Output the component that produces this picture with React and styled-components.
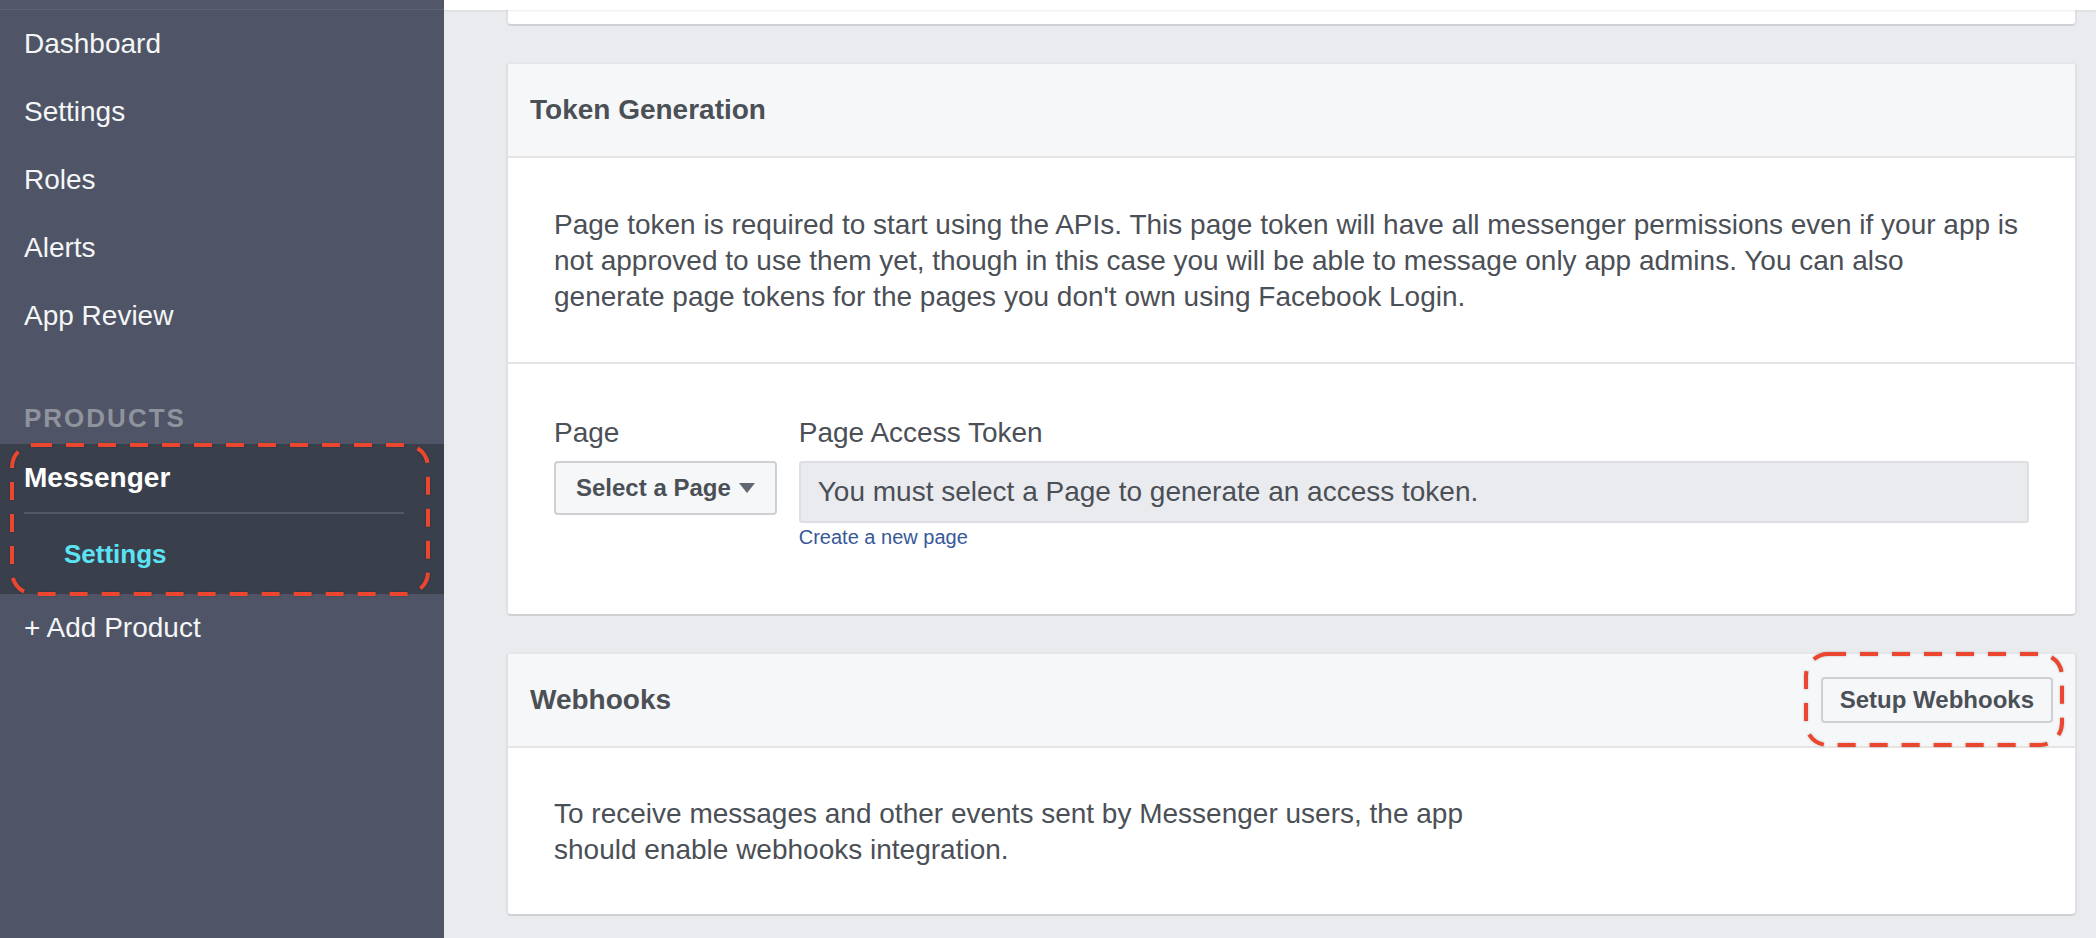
import React from 'react'
import styled, { createGlobalStyle } from 'styled-components'

const GlobalStyle = createGlobalStyle`
  html, body {
    margin: 0;
    padding: 0;
    height: 100%;
    overflow: hidden;
  }
  body {
    font-family: "Liberation Sans", Arial, Helvetica, sans-serif;
    color: #4b4f56;
  }
`

const Page = styled.div`
  display: flex;
  height: 100vh;
  overflow: hidden;
`

const Sidebar = styled.aside`
  width: 444px;
  flex-shrink: 0;
  background: #4f5566;
  display: flex;
  flex-direction: column;
`

const SideTop = styled.div`
  height: 9px;
  background: #525869;
  border-bottom: 1px solid #5c6273;
`

const NavItem = styled.div`
  height: ${props => props.$h || 68}px;
  line-height: ${props => props.$h || 68}px;
  padding-left: ${props => props.$indent || 24}px;
  font-size: ${props => props.$size || 28}px;
  font-weight: ${props => props.$bold ? 700 : 400};
  color: ${props => props.$color || '#f5f6f7'};
  white-space: nowrap;
`

const SectionLabel = styled.div`
  margin: 50px 0 8px;
  padding-left: 24px;
  line-height: 36px;
  font-size: 26px;
  font-weight: 700;
  letter-spacing: 2px;
  color: #8e939d;
`

const ProductGroup = styled.div`
  position: relative;
  background: #3a3f4c;
`

const GroupDivider = styled.div`
  height: 2px;
  margin: 0 40px 0 24px;
  background: #535866;
`

const Marker = styled.svg`
  position: absolute;
  left: ${props => props.$left}px;
  top: ${props => props.$top}px;
  overflow: visible;
  pointer-events: none;
  filter: drop-shadow(0 0 1px rgba(0, 0, 0, 0.25));
`

const Main = styled.main`
  flex: 1;
  background: #e9ebee;
  display: flex;
  flex-direction: column;
`

const TopBar = styled.div`
  height: 10px;
  background: #fff;
  box-shadow: 0 1px 2px rgba(0, 0, 0, 0.08);
  position: relative;
  z-index: 1;
`

const Content = styled.div`
  padding: 0 19px 0 62px;
  display: flex;
  flex-direction: column;
  gap: 36px;
`

const Card = styled.section`
  background: #fff;
  border: 2px solid;
  border-color: #e5e6e9 #dfe0e4 #d0d1d5;
  border-radius: 5px;
  ${props => props.$stub && `
    height: 14px;
    border-top: none;
    border-radius: 0 0 5px 5px;
  `}
`

const CardHeader = styled.header`
  height: 92px;
  padding: 0 22px;
  display: flex;
  align-items: center;
  justify-content: space-between;
  background: #f6f7f9;
  border-bottom: 2px solid #e5e5e5;
  border-radius: 4px 4px 0 0;
`

const Title = styled.h2`
  margin: 0;
  font-size: 28px;
  font-weight: 700;
  color: #4b4f56;
`

const CardSection = styled.div`
  padding: ${props => props.$pad};
  font-size: 28px;
  line-height: 36px;
  color: #4b4f56;
  & + & {
    border-top: 2px solid #e5e5e5;
  }
`

const Text = styled.p`
  margin: 0;
  white-space: nowrap;
`

const FieldRow = styled.div`
  display: flex;
  gap: 22px;
  align-items: flex-start;
`

const Field = styled.div`
  display: flex;
  flex-direction: column;
  flex: ${props => props.$grow ? 1 : 'none'};
`

const Label = styled.div`
  font-size: 28px;
  line-height: 36px;
  margin-bottom: 10px;
  white-space: nowrap;
`

const Button = styled.button`
  box-sizing: border-box;
  height: ${props => props.$h}px;
  padding: 0 ${props => props.$px}px;
  display: inline-flex;
  align-items: center;
  gap: 8px;
  background: #f6f7f9;
  border: 2px solid #ced0d4;
  border-radius: 4px;
  font-family: "Liberation Sans", Arial, sans-serif;
  font-size: 24px;
  font-weight: 700;
  color: #4b4f56;
  white-space: nowrap;
  cursor: pointer;
`

const Caret = styled.span`
  width: 0;
  height: 0;
  border-left: 8.5px solid transparent;
  border-right: 8.5px solid transparent;
  border-top: 10px solid #606770;
`

const TokenBox = styled.div`
  box-sizing: border-box;
  height: 62px;
  padding: 0 17px;
  display: flex;
  align-items: center;
  background: #e9ebee;
  border: 2px solid #dddfe2;
  border-radius: 3px;
  font-size: 28px;
  color: #4b4f56;
  white-space: nowrap;
`

const Link = styled.a`
  margin-top: 4px;
  font-size: 20px;
  line-height: 20px;
  color: #365899;
  text-decoration: none;
`

const MarkedSpot = styled.div`
  position: relative;
`

function DashedMarker({ left, top, w, h }) {
  return (
    <Marker $left={left} $top={top} width={w} height={h}>
      <rect
        x="2"
        y="2"
        width={w - 4}
        height={h - 4}
        rx="22"
        fill="none"
        stroke="#ea4630"
        strokeWidth="4"
        strokeDasharray="18 14"
      />
    </Marker>
  )
}

export default function App() {
  return (
    <Page>
      <GlobalStyle />
      <Sidebar>
        <SideTop />
        <NavItem>Dashboard</NavItem>
        <NavItem>Settings</NavItem>
        <NavItem>Roles</NavItem>
        <NavItem>Alerts</NavItem>
        <NavItem>App Review</NavItem>
        <SectionLabel>PRODUCTS</SectionLabel>
        <ProductGroup>
          <NavItem $bold $color="#ffffff">Messenger</NavItem>
          <GroupDivider />
          <NavItem $h={80} $indent={64} $size={26} $bold $color="#5ce3f3">Settings</NavItem>
          <DashedMarker left={10} top={-1} w={420} h={153} />
        </ProductGroup>
        <NavItem>+ Add Product</NavItem>
      </Sidebar>

      <Main>
        <TopBar />
        <Content>
          <Card $stub />

          <Card>
            <CardHeader>
              <Title>Token Generation</Title>
            </CardHeader>
            <CardSection $pad="49px 46px 47px">
              <Text>
                Page token is required to start using the APIs. This page token will have all messenger permissions even if your app is<br />
                not approved to use them yet, though in this case you will be able to message only app admins. You can also<br />
                generate page tokens for the pages you don't own using Facebook Login.
              </Text>
            </CardSection>
            <CardSection $pad="51px 46px 67px">
              <FieldRow>
                <Field>
                  <Label>Page</Label>
                  <Button $h={54} $px={20}>
                    Select a Page <Caret />
                  </Button>
                </Field>
                <Field $grow>
                  <Label>Page Access Token</Label>
                  <TokenBox>You must select a Page to generate an access token.</TokenBox>
                  <Link href="#">Create a new page</Link>
                </Field>
              </FieldRow>
            </CardSection>
          </Card>

          <Card>
            <CardHeader>
              <Title>Webhooks</Title>
              <MarkedSpot>
                <Button $h={46} $px={17}>Setup Webhooks</Button>
                <DashedMarker left={-17} top={-25} w={260} h={95} />
              </MarkedSpot>
            </CardHeader>
            <CardSection $pad="48px 46px 46px">
              <Text>
                To receive messages and other events sent by Messenger users, the app<br />
                should enable webhooks integration.
              </Text>
            </CardSection>
          </Card>
        </Content>
      </Main>
    </Page>
  )
}
